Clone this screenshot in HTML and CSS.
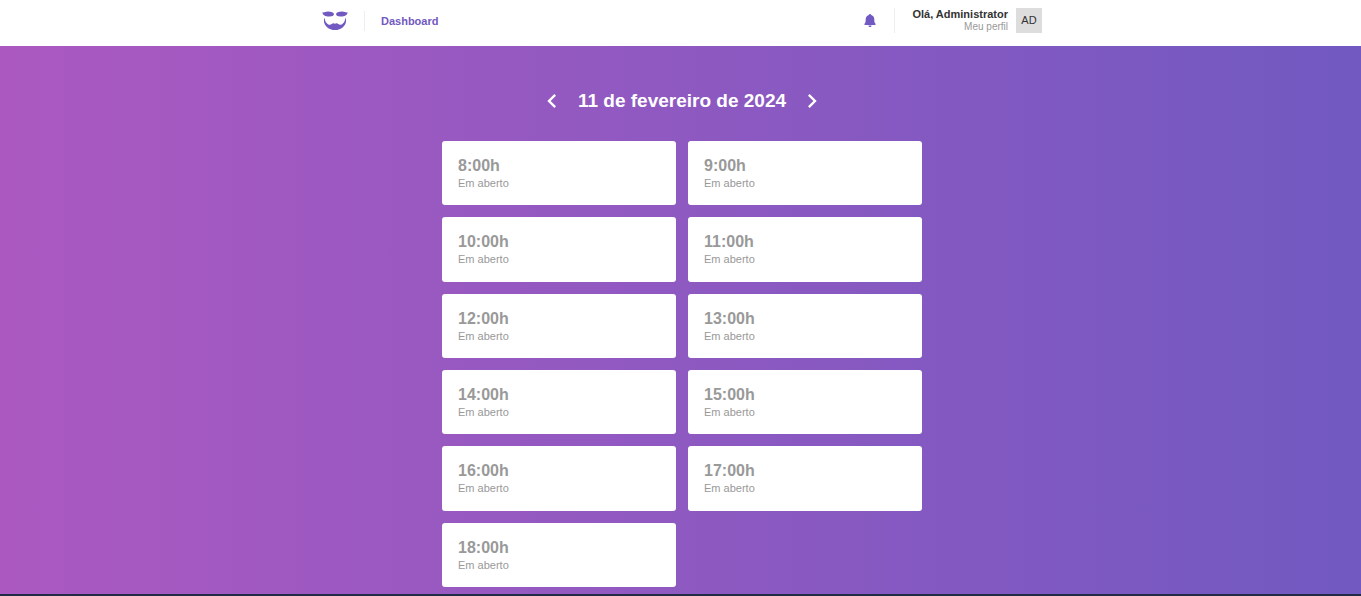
FILE: index.html
```html
<!DOCTYPE html>
<html lang="pt-BR">
<head>
<meta charset="utf-8">
<meta name="viewport" content="width=device-width, initial-scale=1">
<title>Dashboard</title>
<link rel="stylesheet" href="styles.css">
</head>
<body>
<header class="header">
  <div class="header-content">
    <nav class="nav">
      <svg class="logo" viewBox="0 0 26 20" role="img" aria-label="GoBarber">
        <path d="M.3 1.200C1.800 1.900 3 .5 6 .5C9.500 .5 11.800 1.500 12 3C11.900 4.800 9.800 5.700 7 5.500C3.500 5.300 .7 4.200 .3 1.200Z"/>
        <path d="M25.700 1.200C24.200 1.900 23 .5 20 .5C16.500 .5 14.200 1.500 14 3C14.100 4.800 16.200 5.700 19 5.500C22.500 5.300 25.300 4.200 25.700 1.200Z"/>
        <path d="M2.600 6.500C2.800 10 4.500 13.200 7.200 13.700C9.300 14 9.900 12.300 11.600 12.300C12.300 12.300 12.600 12.900 13 12.900C13.400 12.900 13.700 12.300 14.400 12.300C16.100 12.300 16.700 14 18.800 13.700C21.500 13.200 23.200 10 23.400 6.500C26.100 12.500 20.500 19 13 19C5.500 19 -.1 12.500 2.600 6.500Z"/>
      </svg>
      <a class="nav-link" href="#">Dashboard</a>
    </nav>
    <div class="account">
      <button class="bell" type="button" aria-label="Notificações">
        <svg viewBox="0 0 16 16"><path d="M8 1C8.700 1 9.100 1.400 9.200 2.100C11.500 2.700 12.300 4.500 12.300 6.500C12.300 9 12.600 9.800 13.500 10.800V12H2.500V10.800C3.400 9.800 3.700 9 3.700 6.500C3.700 4.500 4.500 2.700 6.800 2.100C6.900 1.400 7.300 1 8 1ZM6.500 12.500H9.500C9.500 13.500 8.900 14 8 14C7.100 14 6.500 13.500 6.500 12.500Z"/></svg>
      </button>
      <div class="profile">
        <div class="profile-text">
          <strong class="profile-name">Olá, Administrator</strong>
          <a class="profile-link" href="#">Meu perfil</a>
        </div>
        <span class="avatar">AD</span>
      </div>
    </div>
  </div>
</header>
<main class="dashboard">
  <div class="date-bar">
    <button class="arrow" type="button" aria-label="Dia anterior"><svg viewBox="0 0 24 24"><path d="M15.410 7.410L14 6l-6 6 6 6 1.410-1.410L10.830 12z"/></svg></button>
    <h1 class="date">11 de fevereiro de 2024</h1>
    <button class="arrow" type="button" aria-label="Próximo dia"><svg viewBox="0 0 24 24"><path d="M10 6L8.590 7.410 13.170 12l-4.580 4.590L10 18l6-6z"/></svg></button>
  </div>
  <ul class="slots">
    <li class="slot"><strong class="slot-time">8:00h</strong><span class="slot-status">Em aberto</span></li>
    <li class="slot"><strong class="slot-time">9:00h</strong><span class="slot-status">Em aberto</span></li>
    <li class="slot"><strong class="slot-time">10:00h</strong><span class="slot-status">Em aberto</span></li>
    <li class="slot"><strong class="slot-time">11:00h</strong><span class="slot-status">Em aberto</span></li>
    <li class="slot"><strong class="slot-time">12:00h</strong><span class="slot-status">Em aberto</span></li>
    <li class="slot"><strong class="slot-time">13:00h</strong><span class="slot-status">Em aberto</span></li>
    <li class="slot"><strong class="slot-time">14:00h</strong><span class="slot-status">Em aberto</span></li>
    <li class="slot"><strong class="slot-time">15:00h</strong><span class="slot-status">Em aberto</span></li>
    <li class="slot"><strong class="slot-time">16:00h</strong><span class="slot-status">Em aberto</span></li>
    <li class="slot"><strong class="slot-time">17:00h</strong><span class="slot-status">Em aberto</span></li>
    <li class="slot"><strong class="slot-time">18:00h</strong><span class="slot-status">Em aberto</span></li>
  </ul>
</main>
</body>
</html>
```
FILE: styles.css
```css
* { box-sizing: border-box; margin: 0; padding: 0; }

body {
  display: flex;
  flex-direction: column;
  min-height: 100vh;
  font-family: "Liberation Sans", Arial, sans-serif;
  font-size: 11px;
}

a { text-decoration: none; }
ul { list-style: none; }
button { background: none; border: 0; cursor: pointer; font: inherit; }
svg { display: block; fill: currentColor; }

.header, .dashboard { padding-left: 3px; }
.header { background: #fff; }

.header-content {
  display: flex;
  align-items: center;
  justify-content: space-between;
  max-width: 720px;
  height: 46px;
  margin: 0 auto;
  padding-bottom: 5px;
}

.nav, .account, .profile { display: flex; align-items: center; }

.logo {
  width: 26px;
  height: 20px;
  margin-right: 16px;
  color: #7159c1;
}

.nav-link {
  padding-left: 16px;
  border-left: 1px solid #eee;
  font-weight: bold;
  line-height: 20px;
  color: #7159c1;
}

.bell { color: #7159c1; }
.bell svg { width: 16px; height: 16px; }

.profile {
  gap: 8px;
  margin-left: 16px;
  padding-left: 17px;
  border-left: 1px solid #eee;
}

.profile-text { text-align: right; }
.profile-name { display: block; line-height: 13px; color: #333; }
.profile-link { display: block; font-size: 10px; line-height: 12px; color: #999; }

.avatar {
  width: 26px;
  background: #ddd;
  line-height: 25px;
  text-align: center;
  color: #333;
}

.dashboard {
  display: flex;
  flex: 1;
  flex-direction: column;
  align-items: center;
  padding-top: 40px;
  padding-bottom: 7px;
  border-bottom: 2px solid #222b45;
  background: linear-gradient(90deg, #ab59c1, #7159c1);
}

.date-bar {
  display: flex;
  align-items: center;
  gap: 12px;
  margin-bottom: 25px;
  color: #fff;
}

.arrow { color: #fff; }
.arrow svg { width: 28px; height: 28px; }
.date { font-size: 19px; line-height: 30px; }

.slots {
  display: grid;
  flex: 1;
  grid-template-columns: 1fr 1fr;
  grid-auto-rows: 1fr;
  gap: 12px;
  width: 100%;
  max-width: 480px;
}

.slot {
  padding: 16px 16px 14px;
  border-radius: 3px;
  background: #fff;
  color: #999;
}

.slot-time { display: block; font-size: 16px; line-height: 18px; }
.slot-status { display: block; line-height: 16px; }
```
